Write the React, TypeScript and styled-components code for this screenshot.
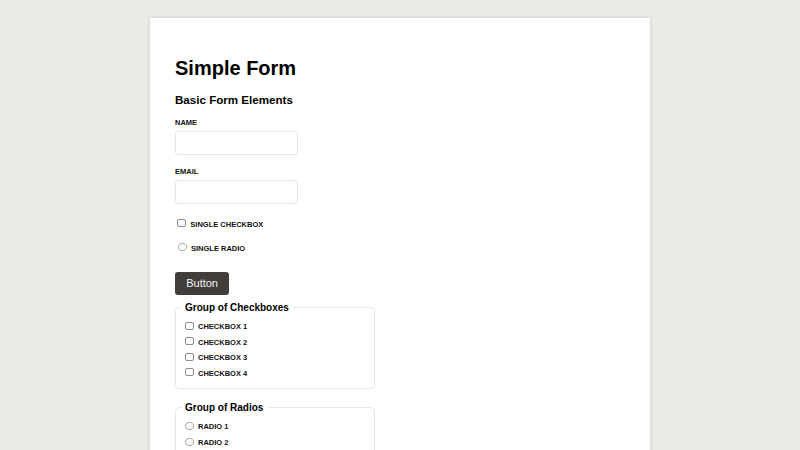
import React from "react";
import styled, { createGlobalStyle } from "styled-components";

const GlobalStyle = createGlobalStyle`
  html, body {
    margin: 0;
    padding: 0;
    background: #ebeae5;
    font-family: "Liberation Sans", Arial, sans-serif;
    color: #111;
  }
`;

const Page = styled.div`
  height: 450px;
  overflow: hidden;
`;

const Card = styled.main`
  box-sizing: border-box;
  width: 500px;
  min-height: 460px;
  margin: 18px auto 0;
  padding: 38px 25px 25px;
  background: #fff;
  box-shadow: 0 0 4px rgba(0, 0, 0, 0.14);
`;

const Title = styled.h1`
  margin: 0;
  font-size: 20px;
  line-height: 24px;
  font-weight: 700;
  color: #000;
`;

const Subtitle = styled.h2`
  margin: 13px 0 0;
  font-size: 11.6px;
  line-height: 14px;
  font-weight: 700;
  color: #000;
`;

const Field = styled.div<{ gap: number }>`
  display: flex;
  flex-direction: column;
  align-items: flex-start;
  margin-top: ${({ gap }) => gap}px;
`;

const FieldLabel = styled.label`
  font-size: 7.5px;
  line-height: 9px;
  font-weight: 700;
  text-transform: uppercase;
  margin-bottom: 4px;
`;

const TextInput = styled.input`
  box-sizing: border-box;
  width: 123px;
  height: 24px;
  margin: 0;
  padding: 0 6px;
  border: 1px solid #e6e6e6;
  border-radius: 3px;
  background: #fff;
  font-size: 10px;
  outline: none;
`;

const OptionRow = styled.label<{ gap?: number; indent?: number }>`
  display: flex;
  align-items: center;
  height: 10px;
  margin-top: ${({ gap }) => gap ?? 0}px;
  padding-left: ${({ indent }) => indent ?? 0}px;
  gap: 4.5px;
  font-size: 7.5px;
  font-weight: 700;
  text-transform: uppercase;
  color: #111;
`;

const Box = styled.input`
  appearance: none;
  box-sizing: border-box;
  width: 8.5px;
  height: 8px;
  margin: 0 0 2px;
  flex: none;
  background: #fff;
  border: 1px solid ${({ type }) => (type === "radio" ? "#a8a8a8" : "#8c8c8c")};
  border-radius: ${({ type }) => (type === "radio" ? "50%" : "2px")};
`;

const Button = styled.button`
  box-sizing: border-box;
  height: 23.5px;
  margin-top: 18.6px;
  padding: 0 11.2px;
  border: none;
  border-radius: 3px;
  background: #413d3b;
  color: #f4f4f4;
  font-family: inherit;
  font-size: 11px;
`;

const Group = styled.fieldset<{ gap: number }>`
  box-sizing: border-box;
  width: 200px;
  margin: ${({ gap }) => gap}px 0 0;
  padding: 8px 9px 9.5px;
  border: 1px solid #e8e8e8;
  border-radius: 4px;
`;

const Legend = styled.legend`
  margin-left: -4px;
  padding: 0 4px;
  font-size: 10px;
  line-height: 12px;
  font-weight: 700;
  color: #000;
`;

const Options = styled.div`
  display: flex;
  flex-direction: column;
  gap: 5.6px;
`;

export default function App() {
  return (
    <Page>
      <GlobalStyle />
      <Card>
        <Title>Simple Form</Title>
        <Subtitle>Basic Form Elements</Subtitle>

        <Field gap={11.4}>
          <FieldLabel htmlFor="name">Name</FieldLabel>
          <TextInput id="name" type="text" />
        </Field>
        <Field gap={12}>
          <FieldLabel htmlFor="email">Email</FieldLabel>
          <TextInput id="email" type="email" />
        </Field>

        <OptionRow gap={14.7} indent={2.3}>
          <Box type="checkbox" />
          Single checkbox
        </OptionRow>
        <OptionRow gap={14} indent={3}>
          <Box type="radio" name="single" />
          Single radio
        </OptionRow>

        <Button>Button</Button>

        <Group gap={6.5}>
          <Legend>Group of Checkboxes</Legend>
          <Options>
            {[1, 2, 3, 4].map((n) => (
              <OptionRow key={n}>
                <Box type="checkbox" />
                Checkbox {n}
              </OptionRow>
            ))}
          </Options>
        </Group>

        <Group gap={13}>
          <Legend>Group of Radios</Legend>
          <Options>
            {[1, 2].map((n) => (
              <OptionRow key={n}>
                <Box type="radio" name="group" />
                Radio {n}
              </OptionRow>
            ))}
          </Options>
        </Group>
      </Card>
    </Page>
  );
}
